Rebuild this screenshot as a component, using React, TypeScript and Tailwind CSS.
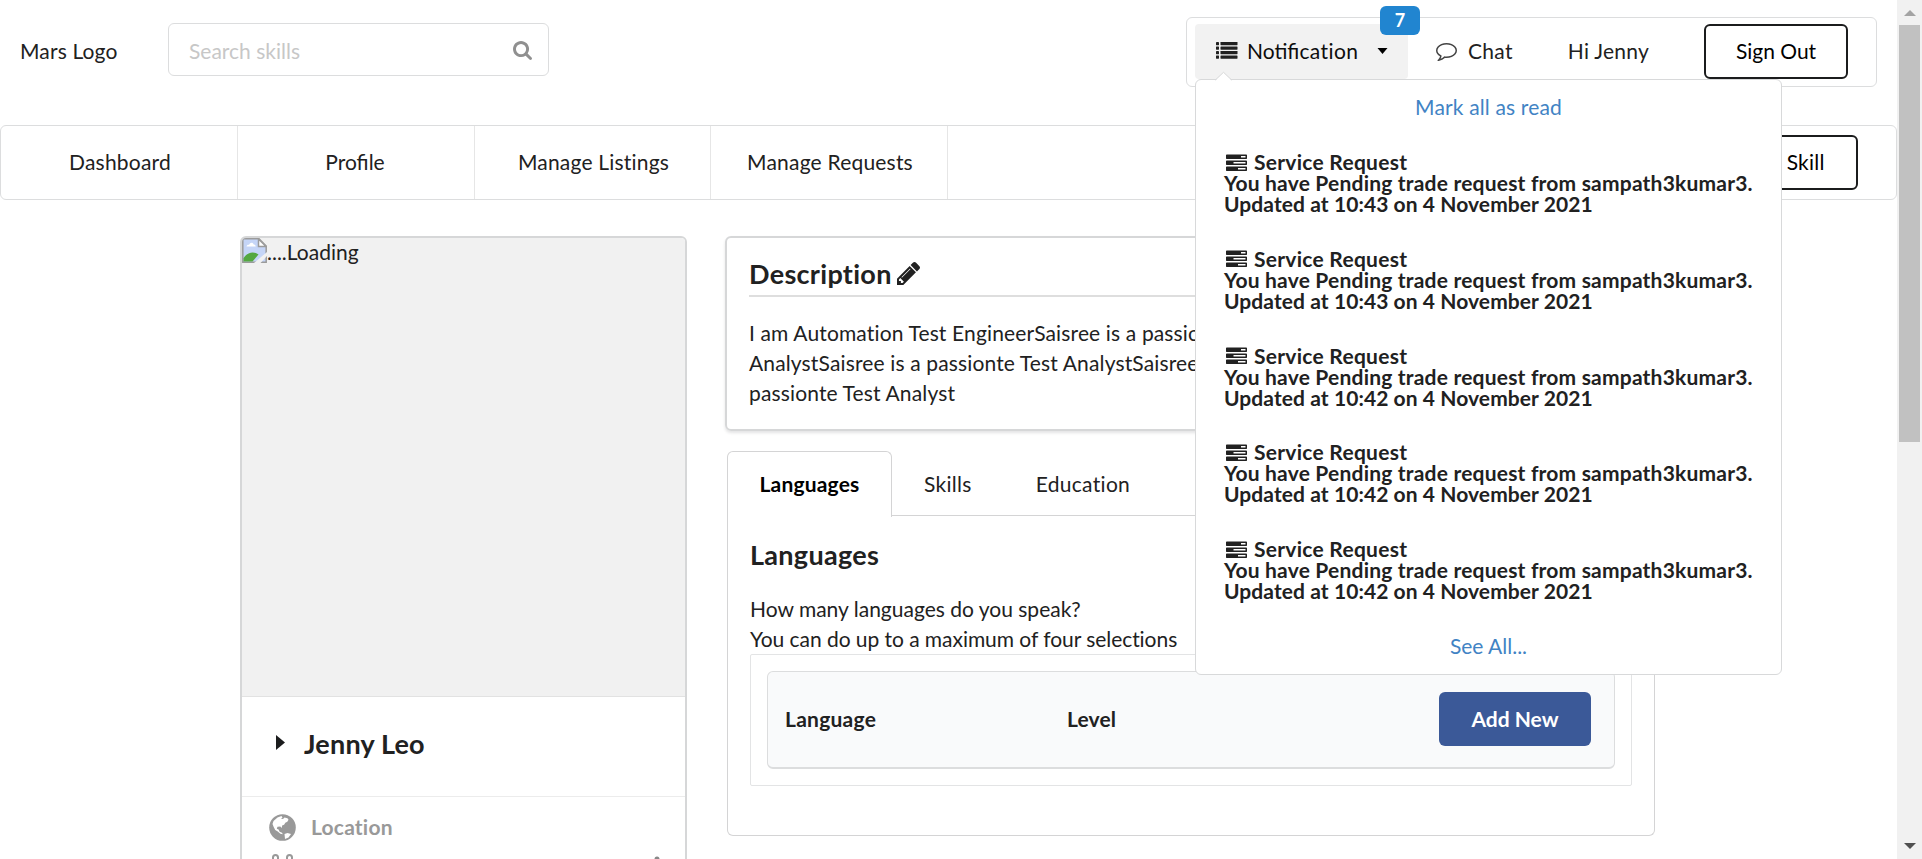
import React from "react";

const ITEMS = ["10:43", "10:43", "10:42", "10:42", "10:42"];

function ListIcon() {
  return (
    <svg viewBox="0 0 22 17" className="h-[17px] w-[22px] shrink-0" fill="currentColor">
      {[0, 4.5, 9, 13.5].map((y) => (
        <g key={y}>
          <rect x="0" y={y} width="3" height="3.2" rx="0.4" />
          <rect x="4.5" y={y} width="17" height="3.2" rx="0.4" />
        </g>
      ))}
    </svg>
  );
}

function TasksIcon() {
  return (
    <svg viewBox="0 0 1792 1536" className="mr-[7px] ml-[2px] h-[18px] w-[21px] shrink-0" fill="currentColor">
      <path fillRule="evenodd" d="M1024 1408h640v-128h-640v128zM640 896h1024V768H640v128zM1280 384h384V256h-384v128zM1792 1216v256q0 26-19 45t-45 19H64q-26 0-45-19t-19-45v-256q0-26 19-45t45-19h1664q26 0 45 19t19 45zM1792 704v256q0 26-19 45t-45 19H64q-26 0-45-19t-19-45V704q0-26 19-45t45-19h1664q26 0 45 19t19 45zM1792 192v256q0 26-19 45t-45 19H64q-26 0-45-19t-19-45V192q0-26 19-45t45-19h1664q26 0 45 19t19 45z" />
    </svg>
  );
}

function CommentIcon() {
  return (
    <svg viewBox="0 0 1792 1792" className="h-[21px] w-[21px] shrink-0" fill="#444">
      <path d="M896 384q-204 0-381.500 69.500t-282 187.500-104.500 255q0 112 71.500 213.500t201.500 175.500l87 50-27 96q-24 91-70 172 152-63 275-171l43-38 57 6q69 8 130 8 204 0 381.500-69.500t282-187.500 104.500-255-104.500-255-282-187.500-381.500-69.500zm896 512q0 174-120 321.500t-326 233-450 85.500q-70 0-145-8-198 175-460 242-49 14-114 22h-5q-15 0-27-10.500t-16-27.500v-1q-3-4-.5-12t2-10 4.500-9.500l6-9 7-8.500 8-9q7-8 31-34.500t34.500-38 31-39.500 32.500-51 27-59 26-76q-157-89-247.500-220t-90.500-281q0-174 120-321.500t326-233 450-85.500 450 85.500 326 233 120 321.500z" />
    </svg>
  );
}

function SearchIcon() {
  return (
    <svg viewBox="0 0 1664 1664" className="h-[19px] w-[19px] text-[#909090]" fill="currentColor">
      <path d="M1152 704q0-185-131.500-316.500T704 256 387.500 387.500 256 704t131.500 316.500T704 1152t316.500-131.500T1152 704zm512 832q0 52-38 90t-90 38q-54 0-90-38l-343-342q-179 124-399 124-143 0-273.500-55.500t-225-150-150-225T0 704t55.500-273.500 150-225 225-150T704 0t273.500 55.500 225 150 150 225T1408 704q0 220-124 399l343 343q37 37 37 90z" />
    </svg>
  );
}

function PencilIcon() {
  return (
    <svg viewBox="0 0 1515 1515" className="h-[23px] w-[23px]" fill="currentColor">
      <path d="M363 1387l91-91-235-235-91 91v107h128v128h107zM886 459q0-22-22-22-10 0-17 7l-542 542q-7 7-7 17 0 22 22 22 10 0 17-7l542-542q7-7 7-17zM832 267l416 416-832 832H0v-416zM1515 363q0 53-37 90l-166 166-416-416 166-165q36-38 90-38 53 0 91 38l235 234q37 39 37 91z" />
    </svg>
  );
}

function GlobeIcon() {
  return (
    <svg viewBox="0 0 27 27" className="h-[27px] w-[27px] shrink-0">
      <circle cx="13.500" cy="13.500" r="13.300" fill="#999" />
      <path d="M4.500 7l4-3.500 4-1.500 1 1.500-1.500 1.200 2 .3 1.500-1.500 3 .8 1 1.500-1.200 2-2 1-1.200 2-2 .8-.3 2.500-1.500-1.500-2.800.2-.7 2 1.800.8 1 2.200 2.400 1 .8 1.400-2.400-.4-3-2.500-2.200-1.200-1.500-3-1.200-3z" fill="#fff" />
      <path d="M15.500 20l3-1 3.500 1-2.500 3.500-3.500 1.500z" fill="#fff" />
    </svg>
  );
}

function BrokenImage() {
  return (
    <svg viewBox="0 0 25 25" className="h-[25px] w-[25px] shrink-0">
      <path d="M.8.800h16.200l7.200 7.200v16.200H.8z" fill="#c5d5f7" stroke="#9b9b9b" strokeWidth="1.500" />
      <path d="M4.500 8.500c.4-2 2-2 2.500-1.600C8 4 11 4 11.700 6.500c2 0 2 2 2 2z" fill="#fff" />
      <path d="M1.500 23.500v-3c3-6 10-8 15-4l-6 7z" fill="#54a840" />
      <path d="M25 14v4L18.500 25H12z" fill="#f1f1f1" />
      <path d="M16.500 1v7.500H24z" fill="#fff" stroke="#9b9b9b" strokeWidth="1.500" />
    </svg>
  );
}

function Notifications() {
  return (
    <div className="absolute top-[61px] left-[8px] z-20 flex h-[596px] w-[587px] flex-col rounded-[6px] border border-[#d8d9da] bg-white">
      <div className="absolute -top-[9px] left-[19px] h-[9px] w-[17px]">
        <svg viewBox="0 0 17 9" className="h-[10px] w-[17px]">
          <path d="M0 9.500L8.500 1 17 9.500z" fill="#fff" />
          <path d="M0 8.800L8.500 .8 17 8.800" fill="none" stroke="#d8d9da" />
        </svg>
      </div>
      <a className="mt-[16px] text-center leading-[21px] tracking-[0.15px] text-[#4183c4]">Mark all as read</a>
      <div className="mt-[34px] flex flex-col gap-[33.800px] pl-[28px] font-bold">
        {ITEMS.map((time, i) => (
          <div key={i} className="h-[63px] leading-[21px] whitespace-nowrap">
            <div className="flex items-center">
              <TasksIcon />
              <span className="tracking-[0.27px]">Service Request</span>
            </div>
            <div className="tracking-[0.2px]">You have Pending trade request from sampath3kumar3.</div>
            <div className="tracking-[0.08px]">Updated at {time} on 4 November 2021</div>
          </div>
        ))}
      </div>
      <a className="mt-[34px] text-center leading-[21px] text-[#4183c4]">See All...</a>
    </div>
  );
}

function Header() {
  return (
    <header className="flex h-[125px] shrink-0 items-start pl-[20px]">
      <div className="mt-[36px] w-[148px] leading-[30px] tracking-[0.15px]">Mars Logo</div>
      <div className="mt-[23px] flex h-[53px] w-[381px] items-center justify-between rounded-[6px] border border-[#dcddde] pt-[2px] pr-[16px] pl-[20px]">
        <span className="text-[#c7c7c7]">Search skills</span>
        <SearchIcon />
      </div>
      <div className="relative mt-[17px] mr-[20px] ml-auto flex h-[70px] w-[691px] rounded-[6px] border border-[#dcddde] pl-[8px]">
        <div className="relative mt-[6px] flex h-[55px] w-[213px] items-center rounded-[4px] bg-[#f2f2f2] pb-[2px] pl-[21px]">
          <ListIcon />
          <span className="ml-[9px] w-[112px] text-[#0d0d0d]">
            <span className="[font-variant-ligatures:common-ligatures]">Notifi</span>
            <span className="tracking-[0.4px]">cation</span>
          </span>
          <svg viewBox="0 0 10 6" className="ml-[18px] h-[6px] w-[11px]">
            <path d="M0 0h10L5 6z" fill="#000" />
          </svg>
          <span className="absolute -top-[18px] left-[185px] flex h-[29px] w-[40px] items-center justify-center rounded-[6px] bg-[#2185d0] pb-px text-[18px] font-bold text-white">7</span>
        </div>
        <div className="mt-[6px] ml-[28px] flex h-[53px] items-center">
          <CommentIcon />
          <span className="ml-[11px] tracking-[0.3px]">Chat</span>
        </div>
        <div className="mt-[6px] ml-[55px] flex h-[53px] items-center tracking-[0.25px]">Hi Jenny</div>
        <button className="mt-[6px] mr-[28px] ml-auto h-[55px] w-[144px] rounded-[6px] border-2 border-[#1b1c1d] pb-px text-black">Sign Out</button>
        <Notifications />
      </div>
    </header>
  );
}

function Nav() {
  return (
    <nav className="flex h-[75px] shrink-0 rounded-[6px] border border-[#dcddde] tracking-[0.2px]">
      <a className="flex w-[237px] items-center justify-center border-r border-[#e6e6e6] pb-[2px] pl-[2px]">Dashboard</a>
      <a className="flex w-[237px] items-center justify-center border-r border-[#e6e6e6] pr-[2px] pb-[2px] tracking-normal [font-variant-ligatures:common-ligatures]">Profile</a>
      <a className="flex w-[236px] items-center justify-center border-r border-[#e6e6e6] pb-[2px] pl-[2px]">Manage Listings</a>
      <a className="flex w-[237px] items-center justify-center border-r border-[#e6e6e6] pb-[2px] pl-[2px]">Manage Requests</a>
      <button className="mt-[9px] mr-[38px] ml-auto h-[55px] w-[166px] rounded-[6px] border-2 border-[#1b1c1d] pb-[2px] pl-[3px] text-black">Share Skill</button>
    </nav>
  );
}

function ProfileCard() {
  return (
    <aside className="h-[700px] w-[447px] overflow-hidden rounded-t-[6px] border-2 border-[#d6d7d8]">
      <div className="flex h-[459px] items-start border-b border-[#e2e2e2] bg-[#f1f1f1]">
        <BrokenImage />
        <span className="leading-[28px]">....Loading</span>
      </div>
      <div className="flex h-[100px] items-center border-b border-[#ececec] pl-[34px]">
        <svg viewBox="0 0 9 15" className="mb-[8px] h-[15px] w-[9px]">
          <path d="M0 0v15l9-7.500z" fill="#1b1c1d" />
        </svg>
        <span className="mb-[6px] ml-[19px] text-[27px] leading-[34px] font-bold tracking-[0.2px]">Jenny Leo</span>
      </div>
      <div className="flex h-[57px] items-center pt-[3px] pl-[27px] text-[#999]">
        <GlobeIcon />
        <span className="ml-[15px] font-bold tracking-[0.2px]">Location</span>
      </div>
      <div className="flex justify-between pr-[24px] pl-[30px]">
        <svg viewBox="0 0 22 20" className="h-[20px] w-[22px]" fill="none" stroke="#999" strokeWidth="2">
          <rect x="1" y="1" width="5" height="8" rx="2.500" />
          <rect x="15" y="1" width="5" height="8" rx="2.500" />
        </svg>
        <svg viewBox="0 0 8 8" className="mt-px h-[8px] w-[8px]">
          <circle cx="4" cy="4" r="2.500" fill="#888" />
        </svg>
      </div>
    </aside>
  );
}

function Languages() {
  return (
    <section className="mt-[20px] ml-[2px]">
      <div className="flex h-[65px]">
        <div className="relative z-10 -mb-px flex w-[165px] items-center justify-center rounded-t-[6px] border border-b-0 border-[#d4d4d5] bg-white pb-[2px] font-bold tracking-[0.18px] text-black">Languages</div>
        <div className="flex flex-1 items-center border-b border-[#d4d4d5] pt-px pl-[32px] tracking-[0.3px]">
          <span>Skills</span>
          <span className="ml-[64px]">Education</span>
        </div>
      </div>
      <div className="h-[320px] rounded-b-[6px] border border-t-0 border-[#d4d4d5] pt-[22px] pr-[22px] pl-[22px]">
        <h3 className="text-[27px] leading-[34px] font-bold tracking-[0.3px]">Languages</h3>
        <p className="mt-[22px] leading-[30px]">
          How many languages do you speak?
          <br />
          <span className="tracking-[-0.05px]">You can do up to a maximum of four selections</span>
        </p>
        <div className="h-[132px] rounded-[2px] border border-[#e3e4e5] px-[16px] pt-[16px]">
          <div className="flex h-[98px] items-center rounded-[6px] border border-b-2 border-[#dcddde] bg-[#f9fafb] pr-[23px] pb-[2px] pl-[17px] font-bold">
            <span className="w-[282px] tracking-[0.25px]">Language</span>
            <span className="tracking-[0.15px]">Level</span>
            <button className="ml-auto h-[54px] w-[152px] rounded-[6px] bg-[#3b5998] text-white">Add New</button>
          </div>
        </div>
      </div>
    </section>
  );
}

export default function App() {
  return (
    <div className="flex h-[859px] w-[1922px] overflow-hidden bg-white font-['Lato',sans-serif] text-[21px] text-[#212121] [font-variant-ligatures:none]">
      <div className="flex h-full w-[1897px] flex-col overflow-hidden">
        <Header />
        <Nav />
        <main className="mt-[36px] flex gap-[38px] pl-[240px]">
          <ProfileCard />
          <div className="w-[930px]">
            <section className="h-[195px] rounded-[6px] border-2 border-[#d6d7d8] px-[22px] pt-[19px] shadow-[0_2px_3px_rgba(34,36,38,0.12)]">
              <div className="flex h-[40px] items-start border-b-2 border-[#dedede]">
                <h3 className="text-[27px] leading-[34px] font-bold tracking-[0.3px]">Description</h3>
                <span className="mt-[5px] ml-[5px]"><PencilIcon /></span>
              </div>
              <p className="mt-[21px] leading-[30px] tracking-[0.14px] whitespace-nowrap">
                I am Automation Test EngineerSaisree is a passionte Test
                <br />
                AnalystSaisree is a passionte Test AnalystSaisree is a
                <br />
                passionte Test Analyst
              </p>
            </section>
            <Languages />
          </div>
        </main>
      </div>
      <div className="flex h-full w-[25px] flex-col items-center bg-[#f1f1f1]">
        <svg viewBox="0 0 12 6" className="mt-[10px] h-[6px] w-[12px]">
          <path d="M0 6h12L6 0z" fill="#a3a3a3" />
        </svg>
        <div className="mt-[9px] h-[417px] w-[21px] bg-[#c1c1c1]" />
        <svg viewBox="0 0 12 6" className="mt-auto mb-[10px] h-[6px] w-[12px]">
          <path d="M0 0h12L6 6z" fill="#505050" />
        </svg>
      </div>
    </div>
  );
}
